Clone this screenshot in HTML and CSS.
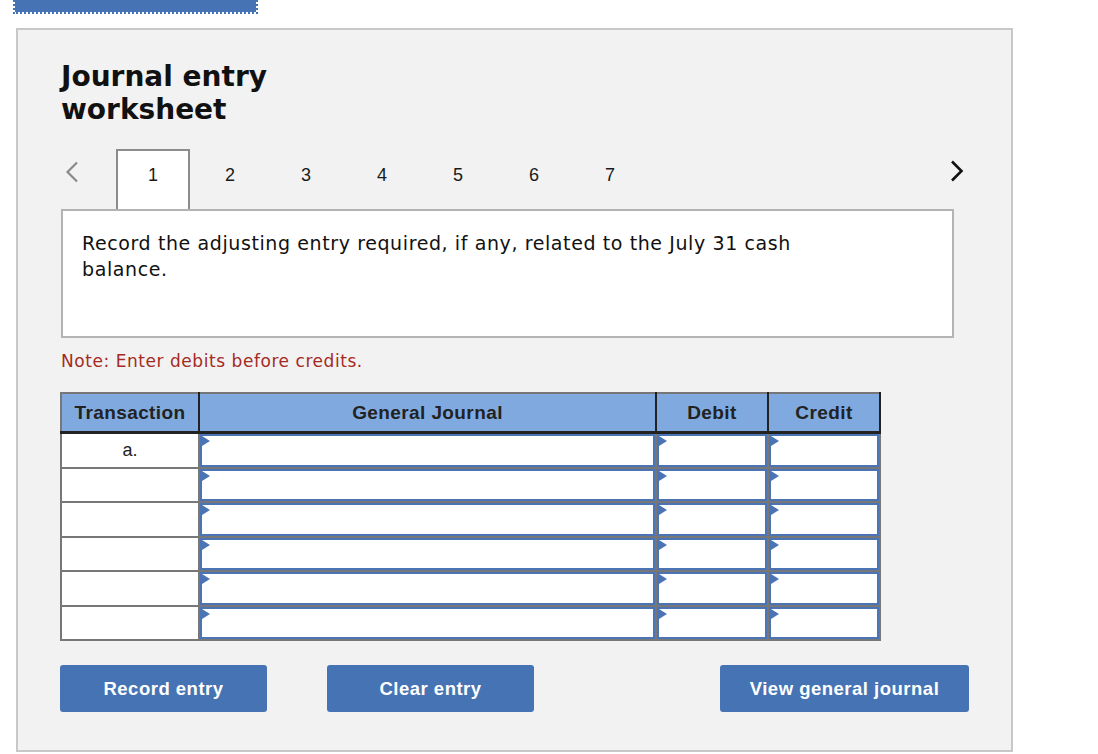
FILE: index.html
```html
<!DOCTYPE html>
<html>
<head>
<meta charset="utf-8">
<title>Journal entry worksheet</title>
<link rel="stylesheet" href="styles.css">
</head>
<body>
<div class="topbar"></div>
<div class="panel">
  <h1 class="title">Journal entry<br>worksheet</h1>
  <div class="tabs">
    <div class="nav prev">
      <svg width="14" height="22" viewBox="0 0 14 22"><path d="M12 1.5 L2.5 11 L12 20.5" fill="none" stroke="#8a8a8a" stroke-width="2.2"/></svg>
    </div>
    <div class="tab active">1</div>
    <div class="tab">2</div>
    <div class="tab">3</div>
    <div class="tab">4</div>
    <div class="tab">5</div>
    <div class="tab">6</div>
    <div class="tab">7</div>
    <div class="spacer"></div>
    <div class="nav next">
      <svg width="14" height="22" viewBox="0 0 14 22"><path d="M2 1.5 L11.5 11 L2 20.5" fill="none" stroke="#111" stroke-width="2.6"/></svg>
    </div>
  </div>
  <div class="question">Record the adjusting entry required, if any, related to the July 31 cash<br>balance.</div>
  <div class="note">Note: Enter debits before credits.</div>
  <table class="journal">
    <thead>
      <tr>
        <th class="c-trans">Transaction</th>
        <th class="c-gj">General Journal</th>
        <th class="c-debit">Debit</th>
        <th class="c-credit">Credit</th>
      </tr>
    </thead>
    <tbody>
      <tr><td class="trans">a.</td><td><div class="inp"></div></td><td><div class="inp"></div></td><td><div class="inp"></div></td></tr>
      <tr><td class="trans"></td><td><div class="inp"></div></td><td><div class="inp"></div></td><td><div class="inp"></div></td></tr>
      <tr><td class="trans"></td><td><div class="inp"></div></td><td><div class="inp"></div></td><td><div class="inp"></div></td></tr>
      <tr><td class="trans"></td><td><div class="inp"></div></td><td><div class="inp"></div></td><td><div class="inp"></div></td></tr>
      <tr><td class="trans"></td><td><div class="inp"></div></td><td><div class="inp"></div></td><td><div class="inp"></div></td></tr>
      <tr><td class="trans"></td><td><div class="inp"></div></td><td><div class="inp"></div></td><td><div class="inp"></div></td></tr>
    </tbody>
  </table>
  <div class="buttons">
    <button class="btn b-record">Record entry</button>
    <button class="btn b-clear">Clear entry</button>
    <button class="btn b-view">View general journal</button>
  </div>
</div>
</body>
</html>
```
FILE: styles.css
```css
html, body {
  margin: 0;
  padding: 0;
  background: #ffffff;
}
body {
  font-family: "DejaVu Sans", Verdana, sans-serif;
  color: #111;
}
.topbar {
  margin-left: 13px;
  width: 241px;
  height: 12px;
  background: #4673b3;
  background-clip: padding-box;
  border: 2px dotted #4673b3;
  border-top: none;
}
.panel {
  margin-top: 14px;
  margin-left: 16px;
  width: 993px;
  height: 720px;
  border: 2px solid #c8c8c8;
  background: #f2f2f2;
  box-sizing: content-box;
  padding: 0;
}
.title {
  margin: 0;
  padding: 30px 0 0 43px;
  font-size: 28px;
  line-height: 33px;
  font-weight: bold;
  color: #111;
}
.tabs {
  margin-top: 23px;
  margin-left: 43px;
  width: 911px;
  height: 60px;
  display: flex;
  align-items: stretch;
}
.nav {
  display: flex;
  align-items: center;
}
.prev {
  width: 55px;
  padding-left: 4px;
  padding-bottom: 14px;
  box-sizing: border-box;
}
.next {
  width: 22px;
  padding-bottom: 16px;
}
.spacer { flex: 1; }
.tab {
  width: 76px;
  font-family: "Liberation Sans", Arial, sans-serif;
  font-size: 18px;
  color: #1a1a1a;
  display: flex;
  justify-content: center;
  padding-top: 16px;
  box-sizing: border-box;
}
.tab.active {
  width: 74px;
  margin-right: 2px;
  background: #fff;
  border: 2px solid #8c8c8c;
  border-bottom: none;
  padding-top: 14px;
}
.question {
  margin-left: 43px;
  width: 893px;
  height: 129px;
  box-sizing: border-box;
  border: 2px solid #b3b3b3;
  background: #fff;
  padding: 19px 19px;
  font-size: 19px;
  letter-spacing: 0.6px;
  line-height: 26px;
  color: #111;
}
.note {
  margin: 12px 0 0 43px;
  font-size: 17px;
  letter-spacing: 0.55px;
  line-height: 22px;
  color: #a52a24;
}
.journal {
  margin: 20px 0 0 42px;
  border-collapse: collapse;
  width: 820px;
  table-layout: fixed;
  border: 2px solid #777;
}
.journal th {
  background: #80aadf;
  font-family: "Liberation Sans", Arial, sans-serif;
  font-weight: bold;
  font-size: 19px;
  letter-spacing: 0.4px;
  color: #222;
  height: 37px;
  padding: 0;
  border-left: 2px solid #222;
  border-right: 2px solid #222;
  border-bottom: 3px solid #222;
  border-top: 2px solid #777;
}
.journal th.c-trans { border-left: 2px solid #777; }
.c-trans { width: 136px; }
.c-gj { width: 455px; }
.c-debit { width: 110px; }
.c-credit { width: 110px; }
.journal td {
  padding: 0;
  border: 2px solid #777;
  background: #fff;
  vertical-align: top;
}
.journal td.trans {
  font-family: "Liberation Sans", Arial, sans-serif;
  font-size: 18px;
  text-align: center;
  vertical-align: middle;
  color: #222;
}
.inp {
  position: relative;
  height: 32.5px;
  box-sizing: border-box;
  border: 2px solid #4a74b5;
  background: #fff;
}
.inp::before {
  content: "";
  position: absolute;
  left: 0;
  top: 0;
  width: 0;
  height: 0;
  border-top: 5px solid transparent;
  border-bottom: 5px solid transparent;
  border-left: 8px solid #4a74b5;
}
.buttons {
  margin: 24px 0 0 42px;
  display: flex;
}
.btn {
  height: 47px;
  border: none;
  border-radius: 3px;
  background: #4673b3;
  color: #fff;
  font-family: "Liberation Sans", Arial, sans-serif;
  font-weight: bold;
  font-size: 18.5px;
  letter-spacing: 0.5px;
  padding: 0;
}
.b-record { width: 207px; }
.b-clear { width: 207px; margin-left: 60px; }
.b-view { width: 249px; margin-left: 186px; }
```
